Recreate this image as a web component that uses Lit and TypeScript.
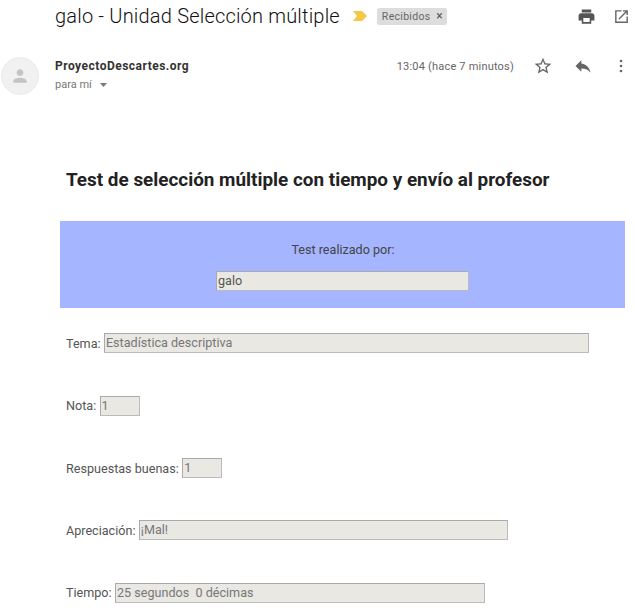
import { LitElement, html, css } from 'lit';
import { customElement } from 'lit/decorators.js';

@customElement('app-root')
export class AppRoot extends LitElement {
  static styles = css`
    :host {
      display: block;
      width: 635px;
      height: 610px;
      overflow: hidden;
      background: #fff;
      font-family: Roboto, "Liberation Sans", sans-serif;
      color: #444;
      font-size: 12.6px;
    }

    .subject {
      display: flex;
      align-items: center;
      height: 32px;
      padding-left: 55px;
    }

    .subject h1 {
      margin: 0;
      font-size: 20px;
      font-weight: 300;
      letter-spacing: 0.19px;
      color: #111;
      white-space: nowrap;
    }

    .marker { margin-left: 12px; }

    .chip {
      margin-left: 9px;
      padding: 0 4px 0 5px;
      height: 17px;
      line-height: 17px;
      border-radius: 2px;
      background: #ddd;
      color: #666;
      font-size: 10.5px;
      letter-spacing: 0.3px;
      white-space: nowrap;
    }

    .chip span { margin-left: 3px; font-size: 12px; color: #555; }

    .subject-icons {
      margin-left: auto;
      display: flex;
      align-items: center;
      gap: 17px;
      padding-right: 5px;
    }

    .sender {
      display: flex;
      margin-top: 25px;
      padding-left: 1px;
    }

    .avatar {
      width: 38px;
      height: 38px;
      border-radius: 50%;
      background: #f1f1f1;
      border: 1px solid #ececec;
      box-sizing: border-box;
      display: flex;
      align-items: center;
      justify-content: center;
    }

    .who { margin-left: 16px; }

    .name {
      font-size: 12px;
      font-weight: 700;
      color: #333;
      letter-spacing: 0.49px;
      line-height: 18px;
    }

    .to {
      margin-top: 3px;
      display: flex;
      align-items: center;
      gap: 8px;
      font-size: 11px;
      color: #777;
      line-height: 14px;
    }

    .meta {
      margin-left: auto;
      display: flex;
      align-items: center;
      height: 18px;
      padding-right: 12px;
    }

    .time {
      font-size: 11px;
      color: #666;
      white-space: nowrap;
      letter-spacing: 0.2px;
    }

    .meta svg.star { margin-left: 19px; }
    .meta svg.reply { margin-left: 20px; }
    .meta svg.more { margin-left: 26px; }

    .message {
      padding-left: 60px;
      padding-right: 10px;
    }

    h2 {
      margin: 72px 0 0 6px;
      font-size: 18.9px;
      font-weight: 700;
      color: #222;
      line-height: 26px;
      white-space: nowrap;
    }

    .banner {
      margin-top: 28px;
      height: 87px;
      box-sizing: border-box;
      padding-top: 21px;
      background: #a5b5ff;
      display: flex;
      flex-direction: column;
      align-items: center;
    }

    .banner p {
      margin: 0 0 0 1px;
      line-height: 16px;
      color: #444;
    }

    .banner .field {
      margin-top: 13px;
      width: 253px;
    }

    .row {
      display: flex;
      align-items: center;
      height: 20px;
      margin-left: 6px;
      margin-top: 42.4px;
      color: #555;
      white-space: nowrap;
    }

    .row.first { margin-top: 25.3px; }

    .row label { margin-right: 3.4px; }

    .field {
      box-sizing: border-box;
      height: 20px;
      line-height: 18px;
      padding-left: 1px;
      background: #e9e8e3;
      border: 1px solid #aaa;
      border-right-color: #bbb;
      border-bottom-color: #bbb;
      color: #777;
      font-size: 12.6px;
      white-space: pre;
    }

    .banner .field { color: #555; }
  `;

  render() {
    return html`
      <div class="subject">
        <h1>galo - Unidad Selección múltiple</h1>
        <svg class="marker" width="16" height="12" viewBox="0 0 16 12">
          <path d="M1 1h9l5 5-5 5H1l4-5z" fill="#f6c744" />
        </svg>
        <div class="chip">Recibidos <span>×</span></div>
        <div class="subject-icons">
          <svg width="19" height="19" viewBox="0 0 24 24">
            <path d="M19 8H5c-1.66 0-3 1.34-3 3v6h4v4h12v-4h4v-6c0-1.66-1.34-3-3-3zm-3 11H8v-5h8v5zM18 3H6v4h12V3z" fill="#555" />
          </svg>
          <svg width="17" height="17" viewBox="0 0 24 24">
            <path d="M19 19H5V5h7V3H3v18h18v-9h-2v7zM14 3v2h3.6l-9.8 9.8 1.4 1.4L19 6.4V10h2V3h-7z" fill="#666" />
          </svg>
        </div>
      </div>

      <div class="sender">
        <div class="avatar">
          <svg width="20" height="20" viewBox="0 0 24 24">
            <path d="M12 12c2.2 0 4-1.8 4-4s-1.8-4-4-4-4 1.8-4 4 1.8 4 4 4zm0 2c-2.7 0-8 1.3-8 4v2h16v-2c0-2.7-5.300-4-8-4z" fill="#c4c4c4" />
          </svg>
        </div>
        <div class="who">
          <div class="name">ProyectoDescartes.org</div>
          <div class="to">
            para mí
            <svg width="7" height="4" viewBox="0 0 7 4"><path d="M0 0h7L3.500 4z" fill="#777" /></svg>
          </div>
        </div>
        <div class="meta">
          <span class="time">13:04 (hace 7 minutos)</span>
          <svg class="star" width="20" height="20" viewBox="0 0 24 24">
            <path d="M22 9.240l-7.190-.62L12 2 9.190 8.630 2 9.240l5.460 4.730L5.820 21 12 17.270 18.180 21l-1.630-7.030L22 9.240zM12 15.400l-3.760 2.270 1-4.280-3.320-2.880 4.380-.38L12 6.100l1.710 4.040 4.380.38-3.320 2.880 1 4.280L12 15.400z" fill="#666" />
          </svg>
          <svg class="reply" width="20" height="20" viewBox="0 0 24 24">
            <path d="M10 9V5l-7 7 7 7v-4.100c5 0 8.500 1.600 11 5.100-1-5-4-10-11-11z" fill="#666" />
          </svg>
          <svg class="more" width="4" height="14" viewBox="0 0 4 14">
            <circle cx="2" cy="2" r="1.300" fill="#666" />
            <circle cx="2" cy="7" r="1.300" fill="#666" />
            <circle cx="2" cy="12" r="1.300" fill="#666" />
          </svg>
        </div>
      </div>

      <div class="message">
        <h2>Test de selección múltiple con tiempo y envío al profesor</h2>
        <div class="banner">
          <p>Test realizado por:</p>
          <div class="field">galo</div>
        </div>
        <div class="row first"><label>Tema:</label><div class="field" style="width:485px">Estadística descriptiva</div></div>
        <div class="row"><label>Nota:</label><div class="field" style="width:40px">1</div></div>
        <div class="row"><label>Respuestas buenas:</label><div class="field" style="width:40px">1</div></div>
        <div class="row"><label>Apreciación:</label><div class="field" style="width:369px">¡Mal!</div></div>
        <div class="row"><label>Tiempo:</label><div class="field" style="width:370px">25 segundos  0 décimas</div></div>
      </div>
    `;
  }
}
